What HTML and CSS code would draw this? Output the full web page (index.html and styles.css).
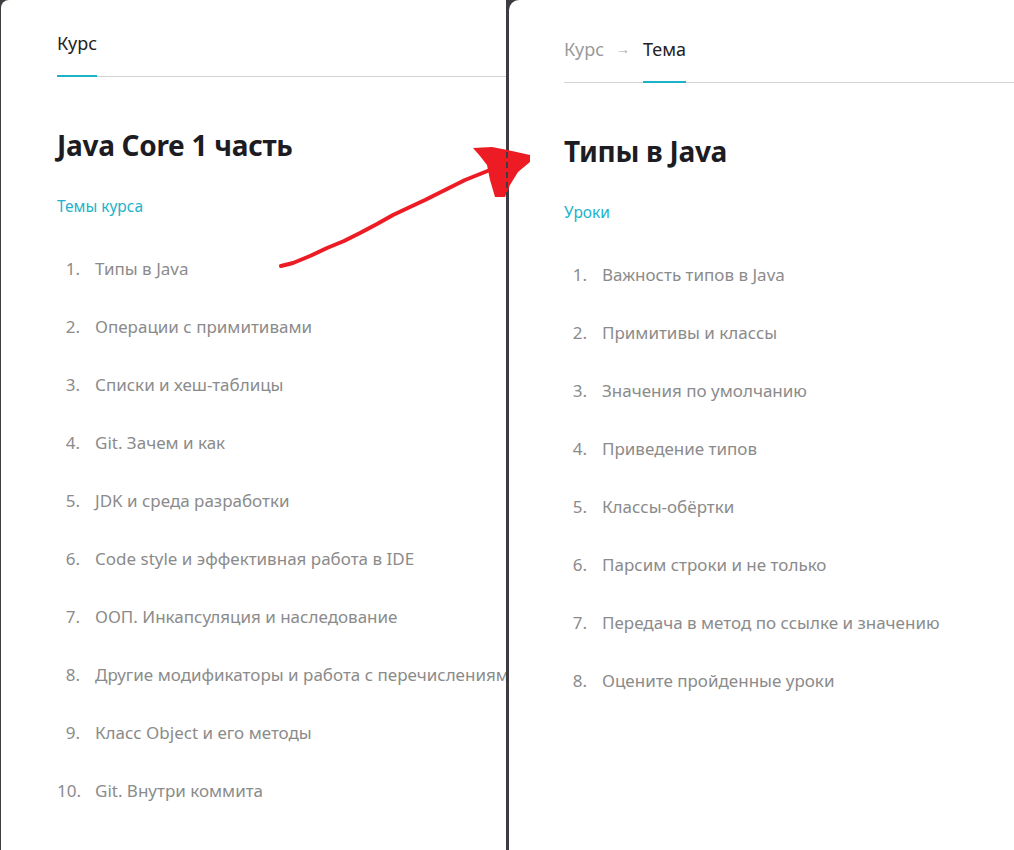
FILE: index.html
```html
<!DOCTYPE html>
<html lang="ru">
<head>
<meta charset="utf-8">
<link rel="stylesheet" href="styles.css">
</head>
<body>
<div class="screen">
  <section class="panel panel-left">
    <nav class="tabs">
      <span class="tab active">Курс</span>
    </nav>
    <h1 class="title">Java Core 1 часть</h1>
    <div class="subtitle">Темы курса</div>
    <ol class="items">
      <li><span class="num">1.</span><span class="txt">Типы в Java</span></li>
      <li><span class="num">2.</span><span class="txt">Операции с примитивами</span></li>
      <li><span class="num">3.</span><span class="txt">Списки и хеш-таблицы</span></li>
      <li><span class="num">4.</span><span class="txt">Git. Зачем и как</span></li>
      <li><span class="num">5.</span><span class="txt">JDK и среда разработки</span></li>
      <li><span class="num">6.</span><span class="txt">Code style и эффективная работа в IDE</span></li>
      <li><span class="num">7.</span><span class="txt">ООП. Инкапсуляция и наследование</span></li>
      <li><span class="num">8.</span><span class="txt">Другие модификаторы и работа с перечислениями</span></li>
      <li><span class="num">9.</span><span class="txt">Класс Object и его методы</span></li>
      <li><span class="num">10.</span><span class="txt">Git. Внутри коммита</span></li>
    </ol>
  </section>
  <section class="panel panel-right">
    <nav class="tabs">
      <span class="tab">Курс</span>
      <span class="sep">→</span>
      <span class="tab active">Тема</span>
    </nav>
    <h1 class="title">Типы в Java</h1>
    <div class="subtitle">Уроки</div>
    <ol class="items">
      <li><span class="num">1.</span><span class="txt">Важность типов в Java</span></li>
      <li><span class="num">2.</span><span class="txt">Примитивы и классы</span></li>
      <li><span class="num">3.</span><span class="txt">Значения по умолчанию</span></li>
      <li><span class="num">4.</span><span class="txt">Приведение типов</span></li>
      <li><span class="num">5.</span><span class="txt">Классы-обёртки</span></li>
      <li><span class="num">6.</span><span class="txt">Парсим строки и не только</span></li>
      <li><span class="num">7.</span><span class="txt">Передача в метод по ссылке и значению</span></li>
      <li><span class="num">8.</span><span class="txt">Оцените пройденные уроки</span></li>
    </ol>
  </section>
  <svg class="arrow" width="1014" height="850" viewBox="0 0 1014 850">
    <path d="M281 266 L293 263 L310 256 L327 248 L344 241 L360 233 L377 224 L393 215 L410 207 L425 200 L445 190 L465 180 L490 170" fill="none" stroke="#ed1c24" stroke-width="4" stroke-linecap="round" stroke-linejoin="round"/>
    <polygon points="473,148 492,147 512,151 530,155 530,162 518,172 510,185 505,197 495,197 490,180 487,165 480,156" fill="#ed1c24"/>
    <line x1="507" y1="152" x2="507" y2="197" stroke="#3d3c41" stroke-width="2" stroke-dasharray="6 4"/>
  </svg>
</div>
</body>
</html>
```
FILE: styles.css
```css
html, body {
  margin: 0;
  padding: 0;
  background: #3d3c41;
}
.screen {
  position: relative;
  width: 1014px;
  height: 850px;
  display: flex;
  gap: 3px;
  overflow: hidden;
  font-family: "Noto Sans", "Open Sans", sans-serif;
}
.panel {
  background: #fff;
  overflow: hidden;
  white-space: nowrap;
  box-sizing: border-box;
}
.panel-left {
  width: 505px;
  margin-left: 1px;
  border-top-left-radius: 8px;
  padding: 31px 0 0 56px;
}
.panel-right {
  flex: 1;
  border-top-left-radius: 10px;
  padding: 37px 0 0 55px;
}
.tabs {
  display: flex;
  align-items: flex-start;
  border-bottom: 1px solid #d2d2d2;
  font-size: 18px;
  line-height: 24px;
}
.tab {
  color: #9a9a9a;
  padding-bottom: 20px;
  margin-bottom: -1px;
  border-bottom: 2px solid transparent;
}
.tab.active {
  color: #222;
  border-bottom-color: #1cb3c9;
}
.sep {
  color: #aaa;
  font-size: 14px;
  margin: 0 13px 0 12px;
}
.title {
  margin: 50px 0 0;
  font-size: 28px;
  line-height: 36px;
  font-weight: 700;
  color: #1d1c22;
  letter-spacing: -0.3px;
}
.subtitle {
  margin-top: 31px;
  font-size: 15.5px;
  line-height: 24px;
  color: #1cb3c9;
}
.items {
  list-style: none;
  margin: 39px 0 0;
  padding: 0;
  display: flex;
  flex-direction: column;
  gap: 34px;
}
.items li {
  display: flex;
  gap: 15px;
  font-size: 17px;
  line-height: 24px;
  color: #8b8b8b;
}
.num {
  width: 23px;
  text-align: right;
  flex: none;
}
.arrow {
  position: absolute;
  left: 0;
  top: 0;
  pointer-events: none;
}
```
